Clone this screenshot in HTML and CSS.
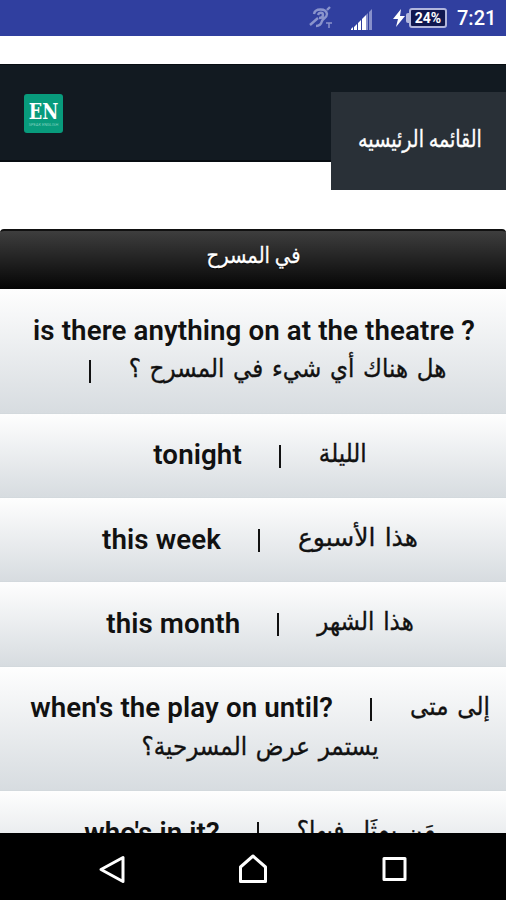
FILE: index.html
```html
<!DOCTYPE html>
<html lang="ar">
<head>
    <meta charset="UTF-8">
    <meta name="viewport" content="width=device-width, initial-scale=1.0">
    <title>في المسرح</title>
    <link rel="stylesheet" href="styles.css">
</head>
<body>
    <div class="status-bar">
        <svg class="icon-ear" width="24" height="24" viewBox="0 0 24 24" fill="none" stroke="#8a94cc" stroke-width="2.4">
            <path d="M5 8c1-6 12-6 13 0 0 4-4 4-5 7-1 4-3 5-6 5M9 9c1-3 5-3 5 0 0 2-2 3-4 3"/>
            <path d="M1 19L9 12M18 4l3-3"/>
            <path d="M17 17h6M20 17v5" stroke-width="1.5"/>
        </svg>
        <svg class="icon-signal" width="22" height="22" viewBox="0 0 22 22">
            <path d="M0 22h2v-3l-2 2zM3 22h3v-6l-3 3zM7 22h3v-10l-3 3zM11 22h4v-15l-4 4z" fill="#fff"/>
            <path d="M15 22V7l2-2v17zM18 22V4l3-3v21z" fill="#8790cb"/>
        </svg>
        <svg class="icon-bolt" width="12" height="18" viewBox="0 0 12 18">
            <path d="M8 0L0 10h5l-2 8 9-11H7z" fill="#fff"/>
        </svg>
        <div class="battery-tip"></div>
        <div class="battery"><span>24%</span></div>
        <span class="clock">7:21</span>
    </div>

    <div class="page">
        <div class="navbar">
            <div class="logo">
                <div class="logo-name">EN</div>
                <div class="logo-sub">SPEAK ENGLISH</div>
            </div>
            <div class="menu" dir="rtl"><span>القائمه الرئيسيه</span></div>
        </div>

        <div class="list">
            <div class="list-title" dir="rtl"><span>في المسرح</span></div>
            <div class="row first">
                <div class="line"><b>is there anything on at the theatre ?</b></div>
                <div class="line"><i></i><span class="ar" dir="rtl">هل هناك أي شيء في المسرح ؟</span></div>
            </div>
            <div class="row">
                <div class="line"><b>tonight</b><i></i><span class="ar" dir="rtl">الليلة</span></div>
            </div>
            <div class="row">
                <div class="line"><b>this week</b><i></i><span class="ar wide" dir="rtl">هذا الأسبوع</span></div>
            </div>
            <div class="row">
                <div class="line"><b>this month</b><i></i><span class="ar" dir="rtl">هذا الشهر</span></div>
            </div>
            <div class="row">
                <div class="line"><b>when's the play on until?</b><i></i><span class="ar" dir="rtl">إلى متى</span></div>
                <div class="line"><span class="ar" dir="rtl">يستمر عرض المسرحية؟</span></div>
            </div>
            <div class="row">
                <div class="line"><b>who's in it?</b><i></i><span class="ar" dir="rtl">مَن يمثَل فيها؟</span></div>
            </div>
        </div>
    </div>

    <div class="nav-keys">
        <svg width="30" height="30" viewBox="0 0 30 30"><path d="M26 3.5v24L4 15.5z"/></svg>
        <svg width="30" height="30" viewBox="0 0 30 30"><path d="M2.5 27.5V13L15 2l12.5 11v14.5z"/></svg>
        <svg width="30" height="30" viewBox="0 0 30 30"><path d="M5 4.5h21v21H5z"/></svg>
    </div>
</body>
</html>
```
FILE: styles.css
```css
* {
    box-sizing: border-box;
}
body {
    margin: 0;
    height: 900px;
    display: flex;
    flex-direction: column;
    overflow: hidden;
    background: #fff;
    font-family: Roboto, "DejaVu Sans", sans-serif;
}
.status-bar {
    height: 36px;
    flex: none;
    background: #303f9f;
    display: flex;
    align-items: center;
    justify-content: flex-end;
    padding-right: 11px;
    color: #fff;
}
.icon-ear {
    margin-right: 18px;
}
.icon-signal {
    margin: 2px 20px 0 0;
}
.icon-bolt {
    margin-right: 1px;
}
.battery-tip {
    width: 3px;
    height: 10px;
    background: #b1b6dc;
    border-radius: 2px 0 0 2px;
}
.battery {
    width: 38px;
    height: 20px;
    border: 2px solid #b1b6dc;
    border-radius: 3px;
    background: #101850;
    font-size: 14px;
    font-weight: 700;
    line-height: 17px;
    text-align: center;
    margin-right: 10px;
}
.clock {
    width: 38px;
    font-size: 20px;
    font-weight: 500;
    white-space: nowrap;
}
.page {
    height: 797px;
    flex: none;
    overflow: hidden;
    padding-top: 28px;
}
.navbar {
    height: 98px;
    background: #121a21;
    border-top: 1px solid #080d12;
    border-bottom: 2px solid #080d12;
    display: flex;
    justify-content: space-between;
    padding: 27px 0 0 24px;
}
.logo {
    width: 39px;
    height: 39px;
    margin-top: 2px;
    border-radius: 3px;
    background: #089b7c;
    color: #fff;
    text-align: center;
    overflow: hidden;
}
.logo-name {
    font: bold 20px/22px "DejaVu Serif", serif;
    padding-top: 6px;
    transform: scale(0.88, 1.1);
}
.logo-sub {
    font-size: 4px;
    line-height: 5px;
    color: #7fd0be;
    white-space: nowrap;
}
.menu {
    width: 175px;
    height: 98px;
    flex: none;
    background: #293037;
    color: #fff;
    font-size: 21px;
    line-height: 94px;
    text-align: center;
    white-space: nowrap;
    padding-left: 3px;
    -webkit-text-stroke: 0.3px #fff;
}
.menu span {
    display: inline-block;
    transform: scale(0.91, 1.1);
}
.list {
    margin-top: 67px;
}
.list-title {
    height: 60px;
    border-top: 2px solid #111;
    border-radius: 4px 4px 0 0;
    background: linear-gradient(#3e3e3e, #050505);
    color: #fff;
    font-size: 21px;
    line-height: 50px;
    text-align: center;
    text-shadow: 0 1px 1px #000;
    padding-left: 1px;
    -webkit-text-stroke: 0.3px #fff;
}
.list-title span {
    display: inline-block;
    transform: scale(0.93, 1.05);
}
.row {
    padding: 22px 0 23.3px 14px;
    border-bottom: 1px solid #d3d9dd;
    background: linear-gradient(#fefefe, #d7dce0);
}
.row.first .line {
    margin-left: -12px;
}
.row.first .line + .line {
    margin-left: -22px;
}
.line {
    height: 38px;
    display: flex;
    justify-content: center;
    align-items: center;
    white-space: nowrap;
    color: #111;
    font-size: 27.7px;
}
.line + .line {
    height: 40.5px;
    padding-top: 2px;
}
.line b {
    font-weight: 600;
    letter-spacing: 0.1px;
}
.line i {
    width: 2px;
    height: 23px;
    margin: 3px 38px 0 37px;
    background: #111;
}
.ar {
    font-size: 23px;
    line-height: 30px;
    word-spacing: 3px;
    transform: translateY(-1px) scaleY(1.1);
    -webkit-text-stroke: 0.3px #111;
}
.ar.wide {
    font-size: 25px;
    transform: translateY(-1px);
}
.nav-keys {
    height: 67px;
    flex: none;
    background: #000;
    display: flex;
    justify-content: center;
    align-items: center;
    gap: 111px;
    padding-top: 4px;
}
.nav-keys svg {
    fill: none;
    stroke: #fff;
    stroke-width: 3;
    stroke-linejoin: round;
}
```
